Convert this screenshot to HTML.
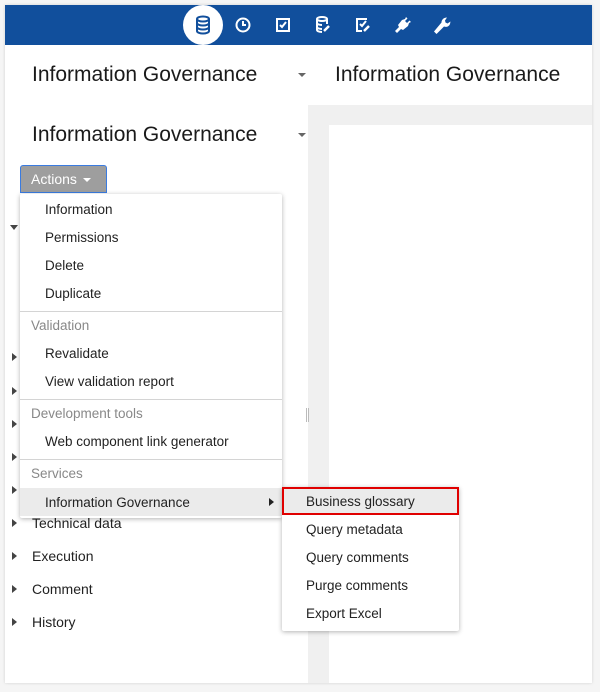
<!DOCTYPE html>
<html><head><style>
*{margin:0;padding:0;box-sizing:border-box}
body{width:600px;height:692px;background:#f5f5f5;font-family:"Liberation Sans",sans-serif;position:relative;overflow:hidden;color:#222}
.a{position:absolute}
.frame{left:5px;top:5px;width:587px;height:678px;background:#fff;box-shadow:0 0 3px rgba(0,0,0,.15)}
.hdr{left:5px;top:5px;width:587px;height:40px;background:#114f9c}
.t{font-size:21px;color:#1a1a1a;white-space:nowrap}
.car{width:0;height:0;border-left:4px solid transparent;border-right:4px solid transparent;border-top:4px solid #666}
.menu{background:#fff;box-shadow:0 1px 5px rgba(0,0,0,.3);border-radius:2px}
.it{position:absolute;left:0;right:0;height:28px;line-height:30px;font-size:13.5px;padding-left:25px;color:#222;white-space:nowrap}
.hd{color:#888;padding-left:11px}
.sep{position:absolute;left:0;right:0;height:1px;background:#d4d4d4}
.tri{position:absolute;left:12px;width:0;height:0;border-top:4px solid transparent;border-bottom:4px solid transparent;border-left:5px solid #444}
.tl{position:absolute;left:32px;font-size:14px;color:#222}
</style></head><body>
<div class="a frame"></div>
<div class="a hdr"></div>
<div class="a" style="left:183px;top:5px;width:40px;height:40px;border-radius:50%;background:#fff"></div>
<svg class="a" style="left:0;top:0" width="600" height="50">
<g fill="none" stroke="#114f9c" stroke-width="2">
<ellipse cx="203" cy="19" rx="6" ry="2.5"/><path d="M197 19v12c0 1.5 3 2.5 6 2.5s6-1 6-2.5V19M197 23c0 1.5 3 2.5 6 2.5s6-1 6-2.5M197 27c0 1.5 3 2.5 6 2.5s6-1 6-2.5"/>
</g>
<g fill="none" stroke="#fff" stroke-width="2">
<circle cx="243" cy="25" r="6.5"/><path d="M243 21v4h3"/>
<rect x="277" y="19" width="12" height="12"/><path d="M280 25l2 2 4-5"/>
<ellipse cx="322" cy="19" rx="5" ry="2"/><path d="M317 19v11c0 1 2 2 5 2M327 19v5M317 23c0 1 2 2 5 2M317 27c0 1 2 2 5 2"/><path d="M324 31l5-5" stroke-width="2.5"/>
<path d="M367 19h-10v12h5M360 24l2 2 4-5"/><path d="M364 31l5-5" stroke-width="2.5"/>
</g>
<g fill="#fff">
<path d="M395 31l4-4-1-2 4-5 3-1 1-2 1.5 1.5-2.5 2.5 2 2 2.5-2.5 1.5 1.5-2 1-1 3-5 4-2-1-4 4z"/>
<path d="M434 31.5l2.5 2.5 7.5-7.5c2.5 1 5 0 6-2.5l0.5-2.5-3 2-2-1-0.5-2 2-3c-3 0-5.5 2-5.5 5z"/>
</g>
</svg>
<div class="a t" style="left:32px;top:63px">Information Governance</div>
<div class="a car" style="left:298px;top:73px"></div>
<div class="a t" style="left:335px;top:63px">Information Governance</div>
<div class="a" style="left:308px;top:105px;width:284px;height:578px;background:#f0f0f0"></div>
<div class="a" style="left:329px;top:125px;width:263px;height:558px;background:#fff"></div>
<div class="a t" style="left:32px;top:123px">Information Governance</div>
<div class="a car" style="left:298px;top:133px"></div>
<div class="a" style="left:20px;top:165px;width:87px;height:28px;background:#9e9e9e;border:1px solid #3a7be0;border-radius:3px 3px 0 0;color:#fff;font-size:14px;line-height:27px;padding-left:10px">Actions<span style="display:inline-block;margin-left:6px;vertical-align:middle;border-left:4px solid transparent;border-right:4px solid transparent;border-top:4px solid #fff"></span></div>
<div class="a" style="left:306px;top:408px;width:3px;height:14px;border-left:1px solid #bbb;border-right:1px solid #bbb"></div>
<div class="a" style="left:10px;top:225px;border-left:4px solid transparent;border-right:4px solid transparent;border-top:5px solid #444"></div>
<div class="tri" style="top:353px"></div><div class="tri" style="top:387px"></div><div class="tri" style="top:420px"></div><div class="tri" style="top:453px"></div><div class="tri" style="top:486px"></div>
<div class="tri" style="top:519px"></div><div class="tl" style="top:515px">Technical data</div>
<div class="tri" style="top:552px"></div><div class="tl" style="top:548px">Execution</div>
<div class="tri" style="top:585px"></div><div class="tl" style="top:581px">Comment</div>
<div class="tri" style="top:618px"></div><div class="tl" style="top:614px">History</div>
<div class="a menu" style="left:20px;top:194px;width:262px;height:324px">
<div class="it" style="top:1px">Information</div>
<div class="it" style="top:29px">Permissions</div>
<div class="it" style="top:57px">Delete</div>
<div class="it" style="top:85px">Duplicate</div>
<div class="sep" style="top:117px"></div>
<div class="it hd" style="top:117px">Validation</div>
<div class="it" style="top:145px">Revalidate</div>
<div class="it" style="top:173px">View validation report</div>
<div class="sep" style="top:205px"></div>
<div class="it hd" style="top:205px">Development tools</div>
<div class="it" style="top:233px">Web component link generator</div>
<div class="sep" style="top:265px"></div>
<div class="it hd" style="top:265px">Services</div>
<div class="it" style="top:294px;background:#ebebeb">Information Governance<span style="position:absolute;left:249px;top:10px;border-top:4px solid transparent;border-bottom:4px solid transparent;border-left:5px solid #222"></span></div>
</div>
<div class="a menu" style="left:282px;top:487px;width:177px;height:144px">
<div class="it" style="top:0;background:#ebebeb;border:2px solid #e00000;line-height:26px;padding-left:22px">Business glossary</div>
<div class="it" style="top:28px;padding-left:24px">Query metadata</div>
<div class="it" style="top:56px;padding-left:24px">Query comments</div>
<div class="it" style="top:84px;padding-left:24px">Purge comments</div>
<div class="it" style="top:112px;padding-left:24px">Export Excel</div>
</div>
</body></html>
